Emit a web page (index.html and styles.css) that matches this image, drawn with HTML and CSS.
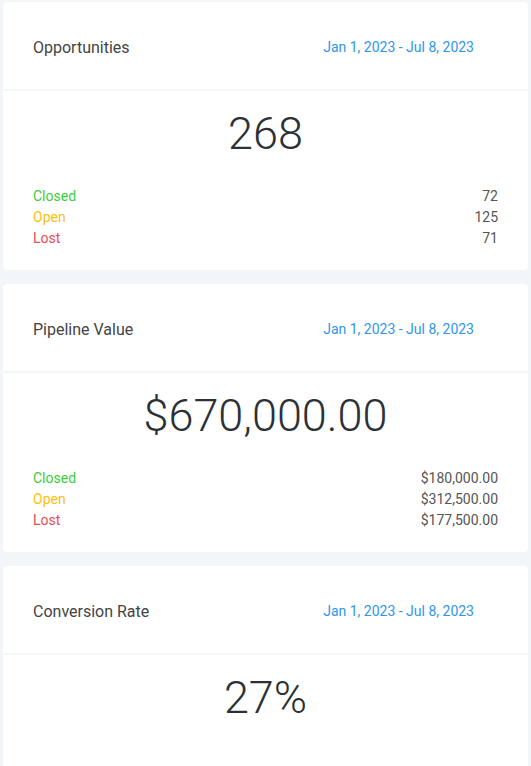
FILE: index.html
```html
<!DOCTYPE html>
<html lang="en">
<head>
<meta charset="utf-8">
<title>Stats</title>
<link rel="stylesheet" href="styles.css">
</head>
<body>
<main class="stack">
  <section class="card">
    <header class="card-head">
      <h2 class="card-title">Opportunities</h2>
      <span class="card-date">Jan 1, 2023 - Jul 8, 2023</span>
    </header>
    <div class="card-body">
      <div class="big">268</div>
      <ul class="rows">
        <li class="row"><span class="lbl closed">Closed</span><span class="val">72</span></li>
        <li class="row"><span class="lbl open">Open</span><span class="val">125</span></li>
        <li class="row"><span class="lbl lost">Lost</span><span class="val">71</span></li>
      </ul>
    </div>
  </section>
  <section class="card">
    <header class="card-head">
      <h2 class="card-title">Pipeline Value</h2>
      <span class="card-date">Jan 1, 2023 - Jul 8, 2023</span>
    </header>
    <div class="card-body">
      <div class="big">$670,000.00</div>
      <ul class="rows">
        <li class="row"><span class="lbl closed">Closed</span><span class="val">$180,000.00</span></li>
        <li class="row"><span class="lbl open">Open</span><span class="val">$312,500.00</span></li>
        <li class="row"><span class="lbl lost">Lost</span><span class="val">$177,500.00</span></li>
      </ul>
    </div>
  </section>
  <section class="card">
    <header class="card-head">
      <h2 class="card-title">Conversion Rate</h2>
      <span class="card-date">Jan 1, 2023 - Jul 8, 2023</span>
    </header>
    <div class="card-body card-body-tall">
      <div class="big">27%</div>
    </div>
  </section>
</main>
</body>
</html>
```
FILE: styles.css
```css
html, body {
  margin: 0;
  padding: 0;
  background: #f2f6f9;
}
body {
  font-family: Roboto, "Liberation Sans", Arial, sans-serif;
  color: #333;
}
.stack {
  display: flex;
  flex-direction: column;
  gap: 14px;
  padding: 2px 3px 0 3px;
}
.card {
  background: #fff;
  border-radius: 4px;
  height: 268px;
  box-sizing: border-box;
}
.card-head {
  display: flex;
  align-items: center;
  justify-content: space-between;
  padding: 36px 54px 32px 30px;
  border-bottom: 2px solid #f2f6f9;
}
.card-title {
  margin: 0;
  font-size: 16px;
  font-weight: 400;
  line-height: 19px;
  color: #444;
}
.card-date {
  font-size: 14px;
  line-height: 19px;
  color: #2f96ef;
}
.card-body {
  padding: 16px 30px 21px 30px;
}
.big {
  font-size: 45px;
  font-weight: 300;
  line-height: 54px;
  text-align: center;
  color: #2b3136;
}
.rows {
  list-style: none;
  margin: 25px 0 0 0;
  padding: 0;
}
.row {
  display: flex;
  justify-content: space-between;
  font-size: 14px;
  line-height: 21px;
}
.val {
  color: #555;
}
.closed { color: #3ccd3c; }
.open { color: #fdbf0d; }
.lost { color: #f04a54; }
.card-body-tall {
  padding-bottom: 200px;
}
```
